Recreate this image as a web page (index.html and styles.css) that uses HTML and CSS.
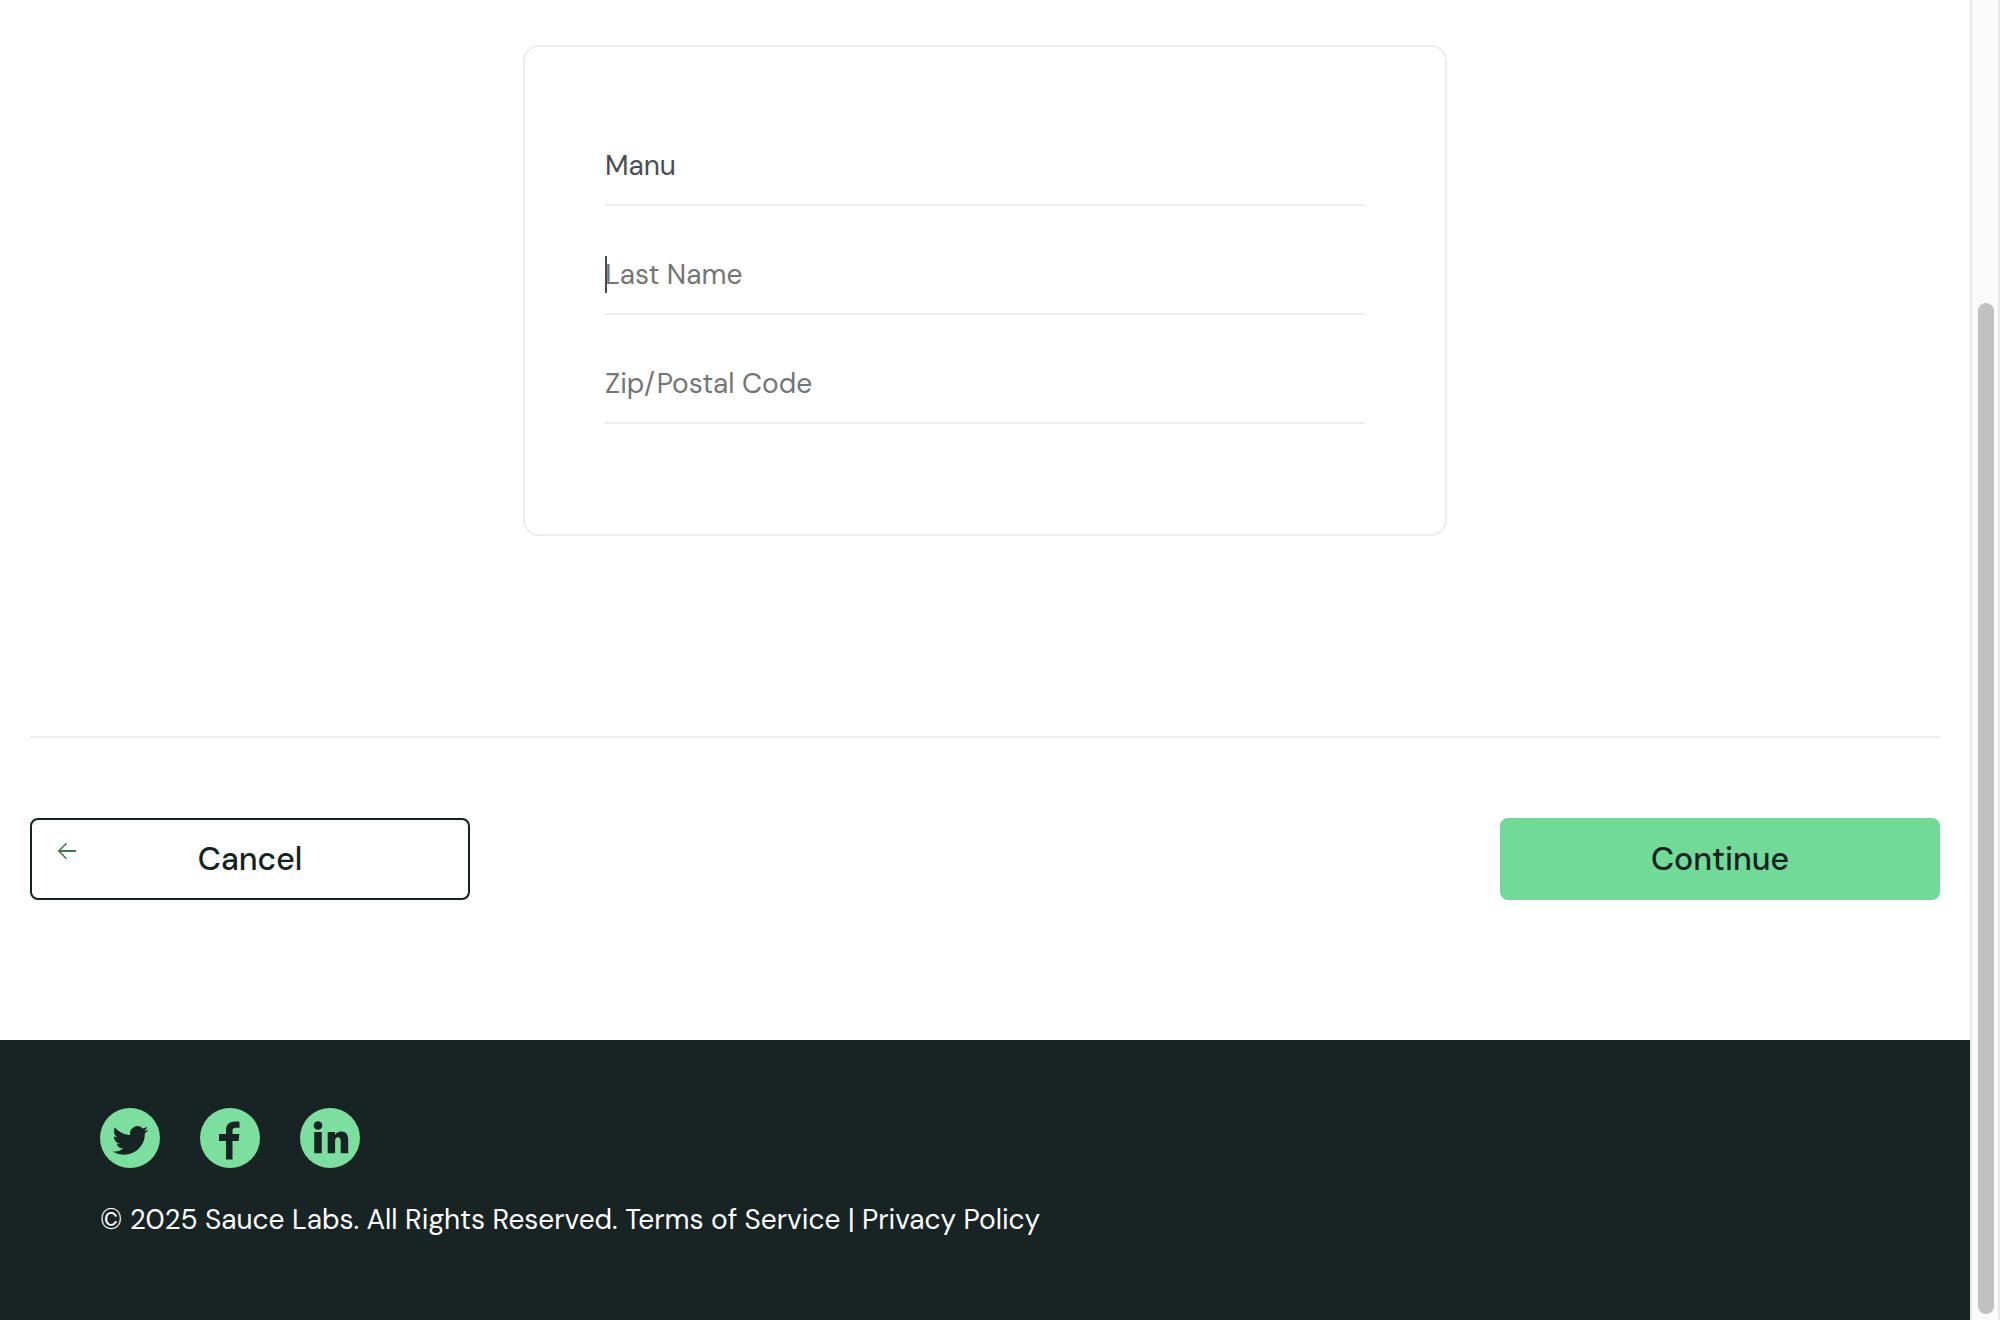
FILE: index.html
```html
<!DOCTYPE html>
<html lang="en">
<head>
<meta charset="utf-8">
<meta name="viewport" content="width=device-width, initial-scale=1">
<title>Checkout: Your Information</title>
<link rel="stylesheet" href="styles.css">
</head>
<body>
<div class="window">
  <div class="page">
    <main class="checkout">
      <form class="checkout-form">
        <div class="card">
          <div class="field">
            <input class="field-input" type="text" aria-label="First Name" placeholder="First Name" value="Manu">
          </div>
          <div class="field">
            <input class="field-input" type="text" aria-label="Last Name" placeholder="Last Name">
            <span class="caret"></span>
          </div>
          <div class="field">
            <input class="field-input" type="text" aria-label="Zip/Postal Code" placeholder="Zip/Postal Code">
          </div>
        </div>
        <div class="actions">
          <button class="btn btn-cancel" type="button">
            <svg class="btn-arrow" viewBox="0 0 20 18" aria-hidden="true"><path class="arrow-shaft" d="M19 9H2"/><path class="arrow-head" d="M9.500 1.200 1.800 9l7.700 7.800"/></svg>
            Cancel
          </button>
          <button class="btn btn-continue" type="submit">Continue</button>
        </div>
      </form>
    </main>
    <footer class="footer">
      <ul class="social">
        <li><a class="social-link" href="#" aria-label="Twitter">
          <svg viewBox="0 0 60 60"><circle class="disc" cx="30" cy="30" r="30"/><path class="glyph" transform="translate(12.500 15) scale(1.500 1.460)" d="M23.953 4.570a10 10 0 01-2.825.775 4.958 4.958 0 002.163-2.723c-.951.555-2.005.959-3.127 1.184a4.920 4.920 0 00-8.384 4.482C7.690 8.095 4.067 6.130 1.640 3.162a4.822 4.822 0 00-.666 2.475c0 1.710.870 3.213 2.188 4.096a4.904 4.904 0 01-2.228-.616v.060a4.923 4.923 0 003.946 4.827 4.996 4.996 0 01-2.212.085 4.936 4.936 0 004.604 3.417 9.867 9.867 0 01-6.102 2.105c-.390 0-.779-.023-1.170-.067a13.995 13.995 0 007.557 2.209c9.053 0 13.998-7.496 13.998-13.985 0-.210 0-.420-.015-.630A9.935 9.935 0 0024 4.590z"/></svg>
        </a></li>
        <li><a class="social-link" href="#" aria-label="Facebook">
          <svg viewBox="0 0 60 60"><circle class="disc" cx="30" cy="30" r="30"/><path class="glyph" d="M26 51.500V33H19v-7h7v-3.500c0-6 3.500-9 9-9 2 0 3.500.1 4.500.3v6H36c-3 0-3.500 1.500-3.500 3.500V26h7l-1 7h-6v18.500z"/></svg>
        </a></li>
        <li><a class="social-link" href="#" aria-label="LinkedIn">
          <svg viewBox="0 0 60 60"><circle class="disc" cx="30" cy="30" r="30"/><circle class="glyph" cx="18" cy="17.500" r="4.300"/><path class="glyph" d="M14.200 24h7.600v21.200h-7.600zM27.700 24H35v2.900c1.200-2 3.400-3.500 6.300-3.500 5 0 6.900 3.300 6.900 8.600v13.200h-7.500V33.500c0-2.600-.7-4.200-2.700-4.200s-2.900 1.500-2.900 4.200v11.700h-7.400z"/></svg>
        </a></li>
      </ul>
      <p class="copy">© 2025 Sauce Labs. All Rights Reserved. <a href="#">Terms of Service</a> | <a href="#">Privacy Policy</a></p>
    </footer>
  </div>
  <div class="scrollbar" aria-hidden="true"><div class="scrollbar-thumb"></div></div>
</div>
</body>
</html>
```

FILE: styles.css
```css
* { box-sizing: border-box; }

body {
  margin: 0;
  background: #fff;
  color: #132322;
  font-family: "DM Sans", Lato, sans-serif;
  font-size: 28px;
}

.window {
  display: grid;
  grid-template-columns: minmax(0, 1fr) 30px;
  min-height: 100vh;
}

.page { display: flex; flex-direction: column; }

.checkout { padding: 45px 30px 140px; }

.card {
  max-width: 924px;
  margin: 0 auto 200px;
  padding: 80px;
  border: 2px solid #ededed;
  border-radius: 16px;
}

.field { position: relative; margin-bottom: 30px; }

.field-input {
  display: block;
  width: 100%;
  height: 79px;
  padding: 20px 0;
  border: 0;
  border-bottom: 2px solid #ededed;
  border-radius: 0;
  outline: 0;
  background: transparent;
  color: #484c55;
  font: inherit;
}

.field-input::placeholder { color: #757575; opacity: 1; }

/* Text cursor in the active field */
.caret {
  position: absolute;
  top: 20px;
  left: 0;
  width: 2px;
  height: 37px;
  background: #484c55;
}

.actions {
  display: flex;
  justify-content: space-between;
  padding-top: 80px;
  border-top: 2px solid #ededed;
}

.btn {
  position: relative;
  width: 440px;
  height: 82px;
  padding: 0;
  border: 2px solid #132322;
  border-radius: 8px;
  background: #fff;
  color: #132322;
  font: inherit;
  font-size: 32px;
  font-weight: 500;
}

.btn-continue { border-color: #72da98; background: #72da98; }

.btn-arrow {
  position: absolute;
  top: 22px;
  left: 25px;
  width: 20px;
  height: 18px;
  fill: none;
  stroke: #3f7353;
}

.arrow-shaft { stroke-width: 2; }
.arrow-head { stroke-width: 1.5; }

.footer {
  flex: 1;
  padding: 68px 100px 80px;
  background: #182424;
  color: #fff;
}

.social {
  display: flex;
  gap: 40px;
  margin: 0 0 32px;
  padding: 0;
  list-style: none;
}

.social-link, .social-link svg { display: block; width: 60px; height: 60px; }
.disc { fill: #7ddf9f; }
.glyph { fill: #182424; }

.copy { margin: 0; line-height: 40px; }
.copy a { color: inherit; text-decoration: none; }

.scrollbar {
  display: flex;
  flex-direction: column;
  padding: 303px 4px 6px 6px;
  border: solid #e8e8e8;
  border-width: 0 2px;
  background: #fafafa;
}

.scrollbar-thumb { flex: 1; border-radius: 8px; background: #c1c1c1; }
```
